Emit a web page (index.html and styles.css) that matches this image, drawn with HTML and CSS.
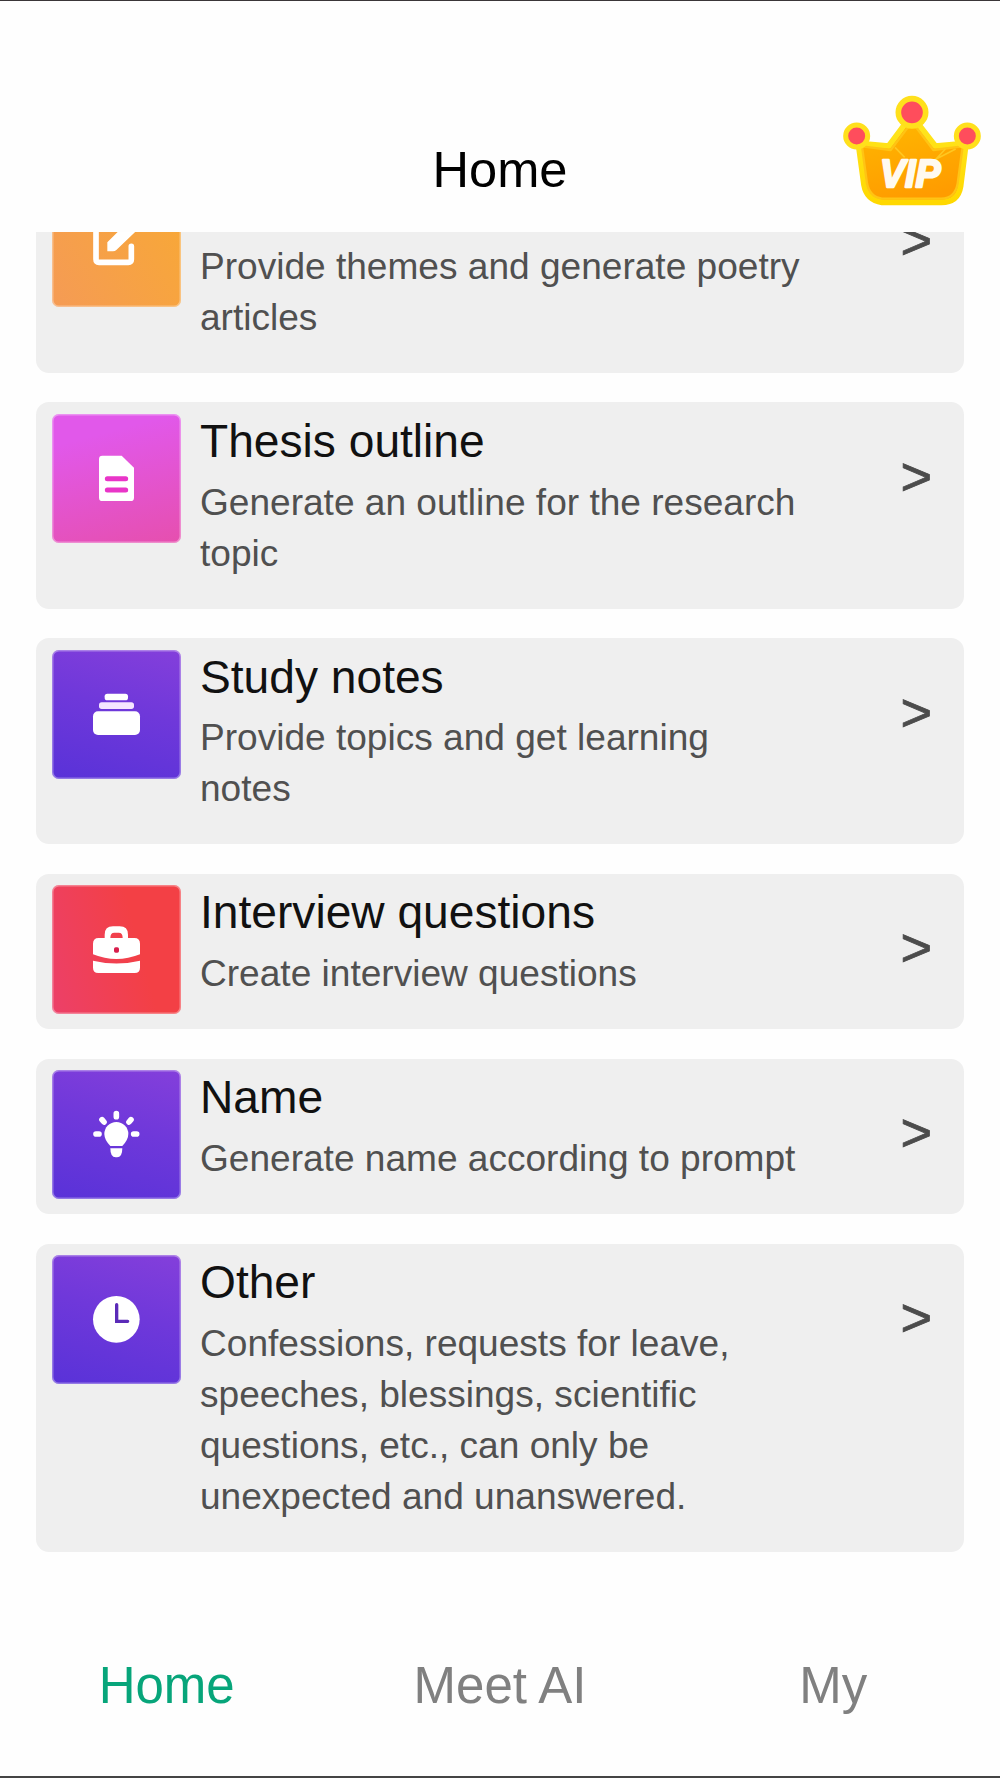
FILE: index.html
```html
<!DOCTYPE html>
<html lang="en">
<head>
<meta charset="utf-8">
<title>Home</title>
<link rel="stylesheet" href="styles.css">
</head>
<body>
<div class="app">
  <header class="header">
    <h1 class="header-title">Home</h1>
    <svg class="vip" viewBox="66 42 420 336">
      <defs>
        <linearGradient id="gold" x1="0" y1="0" x2="0.3" y2="1">
          <stop offset="0" stop-color="#ffb800"/><stop offset="1" stop-color="#ff9c00"/>
        </linearGradient>
        <linearGradient id="rim" x1="0" y1="0" x2="0" y2="1">
          <stop offset="0" stop-color="#ffe51f"/><stop offset="1" stop-color="#ffd800"/>
        </linearGradient>
      </defs>
      <path d="M115 190 L206 198 L258 128 H292 L346 198 L438 190 L422 318 Q414 367 364 367 H186 Q140 360 132 315 Z" fill="url(#gold)" stroke="url(#rim)" stroke-width="17" stroke-linejoin="round"/>
      <path d="M126 199 L212 210 L266 139 H286 L340 210 L428 199 L413 310 Q405 355 364 356 H186 Q149 351 141 310 Z" fill="none" stroke="#ffc414" stroke-width="7" stroke-linejoin="round"/>
      <path d="M225 202 L254 232 M407 207 L331 246 M376 207 L340 246" stroke="#ffc720" stroke-width="5" fill="none"/>
      <circle cx="276" cy="97" r="41" fill="#ff4d5c" stroke="#ffe01c" stroke-width="17"/>
      <circle cx="110" cy="168" r="33" fill="#ff4d5c" stroke="#ffe01c" stroke-width="15"/>
      <circle cx="442" cy="168" r="33" fill="#ff4d5c" stroke="#ffe01c" stroke-width="15"/>
      <text class="vip-text" x="180" y="321" textLength="182" lengthAdjust="spacingAndGlyphs">VIP</text>
    </svg>
  </header>

  <main class="list">
    <section class="card">
      <svg class="tile orange" viewBox="0 0 387 387">
        <path d="M192 133 H141 Q132 133 132 142 V244 Q132 253 141 253 H229 Q238 253 238 244 V205" class="line"/>
        <path d="M166 220 V193 L238 121 L264 148 L193 216 Q189 220 183 220 Z"/>
      </svg>
      <div class="info"><div class="title"></div><p class="desc">Provide themes and generate poetry articles</p></div>
      <span class="arrow">&gt;</span>
    </section>

    <section class="card">
      <svg class="tile pink" viewBox="0 0 387 387">
        <path d="M151 125 H209 L246 161 V251 Q246 261 236 261 H151 Q141 261 141 251 V135 Q141 125 151 125 Z"/>
        <path d="M166 194 H221 M166 228 H221" class="mark" stroke="#e935c8" stroke-width="15"/>
      </svg>
      <div class="info"><h2 class="title">Thesis outline</h2><p class="desc">Generate an outline for the research topic</p></div>
      <span class="arrow">&gt;</span>
    </section>

    <section class="card">
      <svg class="tile purple" viewBox="0 0 387 387">
        <rect x="158" y="131" width="70" height="20" rx="8"/>
        <rect x="141" y="157" width="105" height="20" rx="8" fill="#f5e6ff"/>
        <rect x="123" y="184" width="141" height="71" rx="15"/>
      </svg>
      <div class="info"><h2 class="title">Study notes</h2><p class="desc">Provide topics and get learning notes</p></div>
      <span class="arrow">&gt;</span>
    </section>

    <section class="card">
      <svg class="tile red" viewBox="0 0 387 387">
        <path fill-rule="evenodd" d="M158 159 V149 Q158 124 183 124 H203 Q228 124 228 149 V159 H247 Q264 159 264 176 V208 Q193 236 123 208 V176 Q123 159 140 159 Z M175 159 H212 Q212 143 200 143 H187 Q175 143 175 159 Z"/>
        <path d="M123 227 Q193 244 264 227 V248 Q264 264 248 264 H139 Q123 264 123 248 Z"/>
        <rect x="186" y="187" width="15" height="16" rx="5" fill="#d81e4c"/>
      </svg>
      <div class="info"><h2 class="title">Interview questions</h2><p class="desc">Create interview questions</p></div>
      <span class="arrow">&gt;</span>
    </section>

    <section class="card">
      <svg class="tile purple" viewBox="0 0 387 387">
        <path d="M193 156 A36 36 0 0 1 229 192 Q229 209 211 228 H175 Q157 209 157 192 A36 36 0 0 1 193 156 Z"/>
        <path d="M175 235 H211 Q211 262 195 262 H191 Q175 262 175 235 Z"/>
        <path d="M193 131 V140 M132 192 H141 M245 192 H254 M150 149 L156 156 M237 149 L231 156" class="line"/>
      </svg>
      <div class="info"><h2 class="title">Name</h2><p class="desc">Generate name according to prompt</p></div>
      <span class="arrow">&gt;</span>
    </section>

    <section class="card">
      <svg class="tile purple" viewBox="0 0 387 387">
        <circle cx="193" cy="193" r="70"/>
        <path d="M194 149 V199 H227" class="mark" stroke="#5b2bb8" stroke-width="10"/>
      </svg>
      <div class="info"><h2 class="title">Other</h2><p class="desc">Confessions, requests for leave, speeches, blessings, scientific questions, etc., can only be unexpected and unanswered.</p></div>
      <span class="arrow">&gt;</span>
    </section>
  </main>

  <nav class="tabs">
    <a class="tab active">Home</a>
    <a class="tab">Meet AI</a>
    <a class="tab">My</a>
  </nav>
</div>
</body>
</html>
```
FILE: styles.css
```css
* { box-sizing: border-box; }
body {
  margin: 0;
  background: #fefefe;
  font-family: "Liberation Sans", Arial, sans-serif;
}
.app {
  display: flex;
  flex-direction: column;
  height: 1778px;
  border-top: 1px solid #3a3638;
  border-bottom: 2px solid #444;
  overflow: hidden;
}
.header {
  display: grid;
  grid-template-columns: 1fr auto 1fr;
  flex: none;
  height: 231px;
  padding: 93px 18px 0;
}
.header-title {
  grid-column: 2;
  margin: 47px 0 0;
  font-size: 50.6px;
  font-weight: 400;
  line-height: 58px;
  color: #000;
}
.vip {
  justify-self: end;
  width: 140px;
  height: 112px;
}
.vip-text {
  font-family: "Liberation Sans", Arial, sans-serif;
  font-size: 118px;
  font-weight: 700;
  font-style: italic;
  fill: #fffaf0;
  stroke: #fffaf0;
  stroke-width: 7;
  stroke-linejoin: round;
}
.list {
  display: flex;
  flex-direction: column;
  justify-content: flex-end;
  flex: none;
  gap: 29.6px;
  height: 1319.7px;
  padding: 0 36px;
  overflow: hidden;
}
.card {
  display: grid;
  grid-template-columns: 129px 602px 1fr;
  column-gap: 19px;
  flex: none;
  align-items: start;
  padding: 11.5px 32px 30px 16px;
  border-radius: 13px;
  background: #efefef;
}
.tile {
  display: block;
  width: 129px;
  height: 129px;
  margin-bottom: -20px;
  border-radius: 7px;
  box-shadow: inset 0 0 0 1.5px rgba(255, 255, 255, .35);
  fill: #fff;
}
.line { fill: none; stroke: #fff; stroke-width: 17; stroke-linecap: round; }
.mark { fill: none; stroke-linecap: round; }
.orange { background: linear-gradient(60deg, #f59b55, #f8a934); }
.pink { background: linear-gradient(165deg, #e158ea 20%, #e64fae); }
.purple { background: linear-gradient(195deg, #843fdb, #6f38da 45%, #5932d8); }
.red { background: linear-gradient(75deg, #ec4069, #f34045 65%); }
.title {
  height: 54px;
  margin: 0 0 8.7px;
  font-size: 46.15px;
  font-weight: 400;
  line-height: 55px;
  color: #111;
}
.desc {
  margin: 0;
  font-size: 37.07px;
  line-height: 51px;
  color: #505050;
}
.arrow {
  justify-self: end;
  margin-top: 28px;
  font-size: 54px;
  line-height: 68px;
  color: #4c4c4c;
  -webkit-text-stroke: .8px #4c4c4c;
}
.tabs {
  display: grid;
  grid-template-columns: repeat(3, 1fr);
  padding-top: 105px;
}
.tab {
  text-align: center;
  font-size: 51px;
  line-height: 58px;
  color: #808080;
}
.active { color: #07a57a; }
```
